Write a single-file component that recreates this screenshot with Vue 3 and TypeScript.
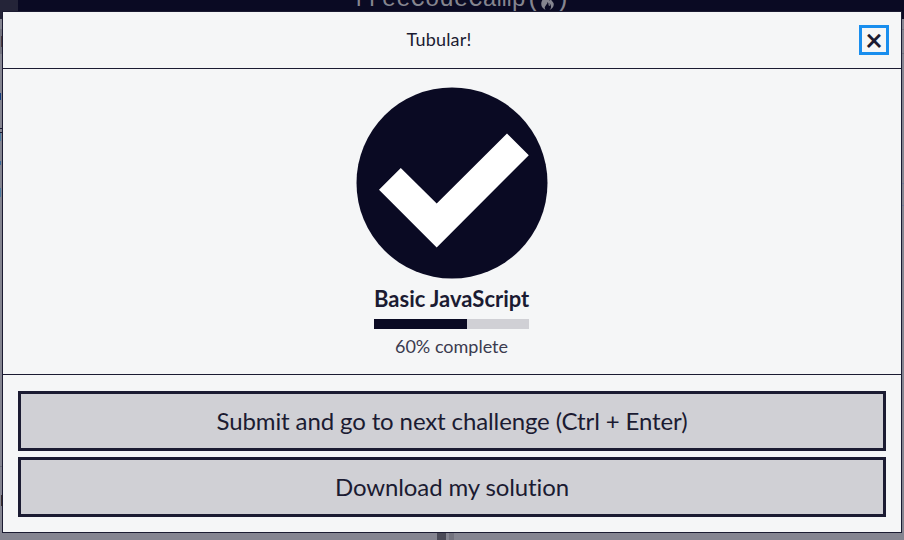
<script setup lang="ts">
import { computed, ref } from 'vue'

const percent = ref(60)
const blockTitle = 'Basic JavaScript'
const barStyle = computed(() => ({ width: `${percent.value}%` }))
const actions: string[] = ['Submit and go to next challenge (Ctrl + Enter)', 'Download my solution']
</script>

<template>
  <div class="page">
    <header class="navbar">
      <span class="search"></span>
      <div class="brand">
        <span>freeCodeCamp</span>
        <span class="paren">(</span>
        <svg class="flame" viewBox="0 0 14 18" aria-hidden="true">
          <path d="M5 0C7 4 2 6 1 10c-1 4 1 6 4 8-1-2-1-3 0-4 1-2 2-2 2-4 2 2 0 3 2 4 1-1 0-2 0-3 2 3 2 5 0 7 3-1 5-4 4-7-1-2-3-3-3-5-1 1 0 2-1 3C9 5 9 2 5 0Z" />
        </svg>
        <span class="paren">)</span>
      </div>
    </header>
    <div class="workspace">
      <span class="mark tab"></span>
      <span class="mark tag"></span>
      <span class="mark keyword"></span>
      <span class="mark edge"></span>
      <span class="mark edge second"></span>
      <span class="mark link"></span>
      <span class="mark code"></span>
      <span class="mark link low"></span>
      <span class="mark rule"></span>
      <span class="mark output"></span>
      <span class="mark line one"></span>
      <span class="mark line two"></span>
      <span class="mark line three"></span>
      <span class="mark line four"></span>
      <span class="mark splitter"></span>
      <span class="mark splitter-side"></span>
    </div>

    <section class="modal" role="dialog" aria-labelledby="modal-title">
      <div class="modal-header">
        <h2 id="modal-title">Tubular!</h2>
        <button class="close" type="button" aria-label="Close"><span>×</span></button>
      </div>
      <div class="modal-body">
        <svg class="check" viewBox="0 0 192 192" aria-hidden="true">
          <circle cx="96" cy="96" r="95.5" fill="#0a0a23" />
          <path d="M23 102.7 44.8 81 80.7 116.5 151 46.5 172.8 68.3 80.7 160.5Z" fill="#fff" />
        </svg>
        <div class="progress">
          <h3>{{ blockTitle }}</h3>
          <div class="track"><div class="bar" :style="barStyle"></div></div>
          <p>{{ percent }}% complete</p>
        </div>
      </div>
      <div class="modal-footer">
        <button v-for="label in actions" :key="label" class="action" type="button">{{ label }}</button>
      </div>
    </section>
  </div>
</template>

<style>
body {
  margin: 0;
  overflow: hidden;
}
</style>

<style scoped>
.page {
  position: relative;
  width: 904px;
  height: 540px;
  overflow: hidden;
  background: #858591;
  color: #1b1b32;
  font-family: Lato, sans-serif;
  font-variant-ligatures: none;
}
.page * {
  box-sizing: border-box;
}
.navbar {
  display: flex;
  height: 19px;
  background: #0a0a23;
}
.search {
  width: 18px;
  background: #242438;
}
.brand {
  position: absolute;
  left: 353px;
  top: -14px;
  display: flex;
  align-items: flex-start;
  color: #85858f;
  font: 24px/28px "Liberation Mono", monospace;
}
.paren {
  font-size: 26px;
}
.paren:last-child {
  margin-left: -1px;
}
.flame {
  width: 15px;
  height: 18px;
  margin: 6px 0 0 -1px;
  fill: currentColor;
}
.mark {
  position: absolute;
  left: 0;
  width: 2px;
}
.tab { top: 29px; height: 25px; background: #73737f; }
.tag { top: 36px; left: 1px; width: 1px; height: 11px; background: #4e3c40; }
.keyword { top: 93px; width: 1px; height: 7px; background: #123b7c; }
.edge { top: 128px; height: 1px; background: #1b1b32; }
.second { top: 132px; }
.link { top: 133px; width: 1px; height: 8px; background: #4a7a9f; }
.code { top: 161px; width: 1px; height: 4px; background: #376999; }
.low { top: 188px; height: 9px; }
.rule { top: 466px; height: 1px; background: #6f707c; }
.output { top: 495px; left: 1px; width: 1px; height: 11px; background: #3b302f; }
.line { left: 902px; height: 1px; background: #72727f; }
.one { top: 29px; }
.two { top: 53px; }
.three { top: 183px; background: #74799a; }
.four { top: 205px; background: #74799a; }
.splitter { left: 437px; top: 533px; width: 9px; height: 7px; background: #4b4b58; }
.splitter-side { left: 449px; top: 533px; width: 5px; height: 7px; background: #73737f; }

.modal {
  position: absolute;
  left: 2px;
  top: 11px;
  display: flex;
  flex-direction: column;
  width: 900px;
  height: 522px;
  border: 1px solid #1b1b32;
  background: #f5f6f7;
}
.modal-header {
  display: flex;
  align-items: center;
  height: 57px;
  padding: 0 12px 0 15px;
  border-bottom: 1px solid #1b1b32;
}
h2 {
  flex: 1;
  margin: 0;
  padding: 0 0 2px 1px;
  text-align: center;
  font-size: 18px;
  line-height: 26px;
  font-weight: 400;
  letter-spacing: 0.2px;
}
.close {
  display: flex;
  align-items: center;
  justify-content: center;
  width: 30px;
  height: 30px;
  padding: 0;
  border: 3px solid #198eee;
  background: #f5f6f7;
  color: #1b1b32;
  font: 700 30px/24px Lato, sans-serif;
}
.close span {
  margin-top: -3px;
}
.modal-body {
  display: flex;
  flex-direction: column;
  align-items: center;
  height: 306px;
  padding-top: 18px;
  border-bottom: 1px solid #1b1b32;
}
.check {
  display: block;
  width: 192px;
  height: 192px;
}
.progress {
  width: 156px;
  padding: 7px 1px 0 0;
  text-align: center;
}
h3 {
  margin: 0;
  font-size: 22px;
  line-height: 26px;
  font-weight: 700;
  white-space: nowrap;
}
.track {
  height: 10px;
  margin-top: 7px;
  background: #d0d0d5;
}
.bar {
  height: 100%;
  background: #0a0a23;
}
p {
  margin: 4px 0 0;
  color: #3b3b4f;
  font-size: 18px;
  line-height: 26px;
}
.modal-footer {
  display: flex;
  flex-direction: column;
  gap: 6px;
  padding: 16px 15px 15px;
}
.action {
  width: 868px;
  height: 60px;
  padding: 0;
  border: 3px solid #1b1b32;
  background: #d0d0d5;
  color: #1b1b32;
  font: 24px/34px Lato, sans-serif;
  font-variant-ligatures: none;
  letter-spacing: -0.12px;
}
</style>
